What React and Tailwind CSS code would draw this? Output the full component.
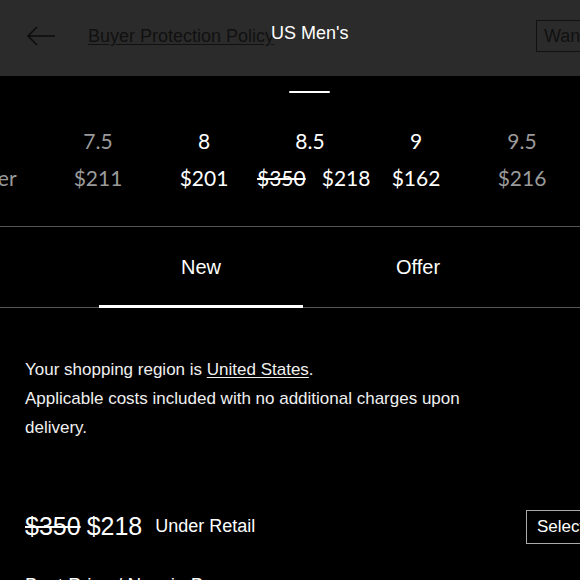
import React from "react";

const sizes = [
  { size: "", price: "Offer", dim: true },
  { size: "7.5", price: "$211", dim: true },
  { size: "8", price: "$201" },
  { size: "8.5", price: "$218", retail: "$350" },
  { size: "9", price: "$162" },
  { size: "9.5", price: "$216", dim: true },
];

function App() {
  return (
    <div
      className="w-[580px] h-[580px] overflow-hidden bg-black text-white"
      style={{ fontFamily: "'Liberation Sans', Arial, sans-serif" }}
    >
      {/* header */}
      <div className="relative h-[76px] bg-[#2b2b2b] flex items-center pb-[4px]">
        <svg className="ml-[26px]" width="30" height="22" viewBox="0 0 30 22" fill="none" stroke="#0d0d0d" strokeWidth="1.6">
          <path d="M29 11H2M11 2L2 11l9 9" />
        </svg>
        <a className="ml-[32px] text-[18px] text-[#111] underline underline-offset-2 whitespace-nowrap">
          Buyer Protection Policy
        </a>
        <span className="absolute left-[271px] top-[20px] text-[18px] text-white">US Men's</span>
        <button className="ml-auto mr-[-64px] h-[32px] px-[7px] border border-[#111] text-[18px] text-[#111] text-left w-[108px]">
          Want
        </button>
      </div>

      {/* handle */}
      <div className="ml-[289px] mt-[15px] w-[41px] h-[2px] bg-white rounded" />

      {/* sizes */}
      <div className="flex ml-[-61px] mt-[34px] h-[99px]" style={{ fontFamily: "Lato, sans-serif" }}>
        {sizes.map((s, i) => (
          <div key={i} className={`w-[106px] shrink-0 text-center text-[21px] ${s.dim ? "text-[#9a9a9a]" : "text-white"}`}>
            <div className="h-[27px] leading-[27px]">{s.size}</div>
            <div className="mt-[10px] leading-[27px] whitespace-nowrap">
              {s.retail && <span className="line-through mr-[16px]">{s.retail}</span>}
              {s.price}
            </div>
          </div>
        ))}
      </div>

      {/* tabs */}
      <div className="border-t border-b border-[#555] flex h-[82px]">
        <div className="w-[99px]" />
        <div className="relative w-[204px] flex items-center justify-center text-[20px]">
          New
          <div className="absolute left-0 right-0 bottom-[-1px] h-[3px] bg-white" />
        </div>
        <div className="w-[230px] flex items-center justify-center text-[20px]">Offer</div>
      </div>

      {/* region note */}
      <div className="pl-[25px] pt-[47px] w-[480px] text-[17px] leading-[29px] text-[#f0f0f0]">
        <p>
          Your shopping region is <span className="underline underline-offset-2">United States</span>.
        </p>
        <p>Applicable costs included with no additional charges upon delivery.</p>
      </div>

      {/* price row */}
      <div className="flex items-center pl-[25px] mt-[66px]">
        <span className="text-[25px] line-through">$350</span>
        <span className="text-[25px] ml-[6px]">$218</span>
        <span className="text-[18px] ml-[13px]">Under Retail</span>
        <button className="ml-auto mr-[-40px] w-[94px] h-[34px] border border-[#aaa] text-[17px] text-left pl-[10px]">
          Select
        </button>
      </div>

      <div className="pl-[25px] mt-[25px] text-[19px] whitespace-nowrap">Best Price / New in Box</div>
    </div>
  );
}

export default App;
